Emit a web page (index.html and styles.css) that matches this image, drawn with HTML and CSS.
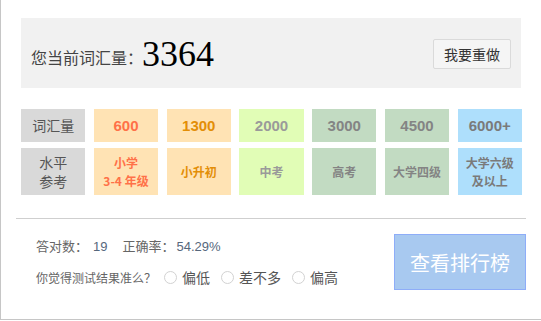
FILE: index.html
```html
<!DOCTYPE html>
<html lang="zh-CN">
<head>
<meta charset="utf-8">
<title>词汇量测试结果</title>
<link rel="stylesheet" href="styles.css">
</head>
<body>
<div class="page">
  <div class="summary">
    <div class="current">
      <span class="current-label">您当前词汇量：</span><span class="current-num">3364</span>
    </div>
    <button class="redo">我要重做</button>
  </div>

  <div class="levels">
    <div class="cell head">词汇量</div>
    <div class="cell num c-600">600</div>
    <div class="cell num c-1300">1300</div>
    <div class="cell num c-2000">2000</div>
    <div class="cell num c-3000">3000</div>
    <div class="cell num c-4500">4500</div>
    <div class="cell num c-6000">6000+</div>

    <div class="cell head tall">水平<br>参考</div>
    <div class="cell lvl c-600">小学<br>3-4 年级</div>
    <div class="cell lvl c-1300">小升初</div>
    <div class="cell lvl c-2000">中考</div>
    <div class="cell lvl c-3000">高考</div>
    <div class="cell lvl c-4500">大学四级</div>
    <div class="cell lvl c-6000">大学六级<br>及以上</div>
  </div>

  <div class="sep"></div>

  <div class="result">
    <div class="stats">
      <div class="line1">答对数：<span class="val first">19</span><span class="gap"></span>正确率：<span class="val second">54.29%</span></div>
      <div class="line2">
        <span class="question">你觉得测试结果准么？</span>
        <label class="opt"><span class="radio"></span>偏低</label>
        <label class="opt"><span class="radio"></span>差不多</label>
        <label class="opt"><span class="radio"></span>偏高</label>
      </div>
    </div>
    <button class="rank">查看排行榜</button>
  </div>
</div>
</body>
</html>
```

FILE: styles.css
```css
html, body {
  margin: 0;
  padding: 0;
  background: #fff;
  overflow: hidden;
}
body {
  font-family: "Noto Sans CJK SC", "Liberation Sans", sans-serif;
}
.page {
  width: 541px;
  height: 320px;
  box-sizing: border-box;
  border-left: 1px solid #c6c6c6;
  border-bottom: 1px solid #c6c6c6;
  padding-top: 18px;
}
.summary {
  margin-left: 20px;
  width: 500px;
  height: 70px;
  box-sizing: border-box;
  background: #f1f1f1;
  display: flex;
  align-items: center;
  justify-content: space-between;
  padding: 0 10px;
}
.current {
  display: flex;
  align-items: baseline;
  padding-top: 2px;
}
.current-label {
  font-size: 16px;
  color: #444;
  position: relative;
  top: -2px;
}
.current-num {
  font-family: "Liberation Serif", serif;
  font-size: 36px;
  color: #000;
  margin-left: -1px;
}
.redo {
  width: 78px;
  height: 30px;
  box-sizing: border-box;
  border: 1px solid #dadada;
  border-radius: 2px;
  background: #f5f5f5;
  color: #333;
  font-family: "Noto Sans CJK SC", sans-serif;
  font-size: 14px;
  padding: 0;
  margin-top: 2px;
}
.levels {
  margin: 21px 0 0 20px;
  width: 501px;
  display: grid;
  grid-template-columns: repeat(7, 1fr);
  grid-template-rows: 33px 47px;
  column-gap: 8.3px;
  row-gap: 6px;
}
.cell {
  display: flex;
  align-items: center;
  justify-content: center;
  text-align: center;
}
.head {
  background: #d9d9d9;
  color: #555;
  font-size: 14px;
  line-height: 19px;
}
.num {
  font-family: "Liberation Sans", sans-serif;
  font-weight: bold;
  font-size: 15px;
}
.lvl {
  font-weight: bold;
  font-size: 12px;
  line-height: 18px;
}
.c-600 { background: #ffe3b4; color: #ff7148; }
.c-1300 { background: #ffe3b4; color: #e38e07; }
.c-2000 { background: #e1fdb6; color: #9a9a9a; }
.c-3000 { background: #c2dbc2; color: #848484; }
.c-4500 { background: #c2dbc2; color: #848484; }
.c-6000 { background: #aedffc; color: #7a7a7a; }
.sep {
  margin: 23px 0 0 15px;
  width: 510px;
  border-top: 1px solid #cfcfcf;
}
.result {
  margin-left: 15px;
  width: 510px;
  padding-top: 15px;
  display: flex;
  justify-content: space-between;
  align-items: flex-start;
}
.stats {
  padding-left: 20px;
  padding-top: 2px;
}
.line1 {
  font-size: 13px;
  line-height: 20px;
  color: #666;
}
.val {
  font-family: "Liberation Sans", sans-serif;
  color: #56677c;
}
.val.first {
  margin-left: 5px;
}
.val.second {
  margin-left: 2px;
}
.gap {
  display: inline-block;
  width: 15px;
}
.line2 {
  margin-top: 10px;
  height: 20px;
  display: flex;
  align-items: center;
}
.question {
  font-size: 12px;
  color: #666;
  margin-right: 8px;
}
.opt {
  display: flex;
  align-items: center;
  font-size: 14px;
  color: #555;
  margin-right: 11px;
}
.radio {
  width: 13px;
  height: 13px;
  box-sizing: border-box;
  border: 1px solid #d2d2d2;
  border-radius: 50%;
  background: #fff;
  margin-right: 5px;
}
.rank {
  width: 132px;
  height: 56px;
  box-sizing: border-box;
  background: #a8c9f0;
  border: 1px solid #8eadf8;
  color: #fff;
  font-family: "Noto Sans CJK SC", sans-serif;
  font-size: 20px;
  padding: 0;
}
```
